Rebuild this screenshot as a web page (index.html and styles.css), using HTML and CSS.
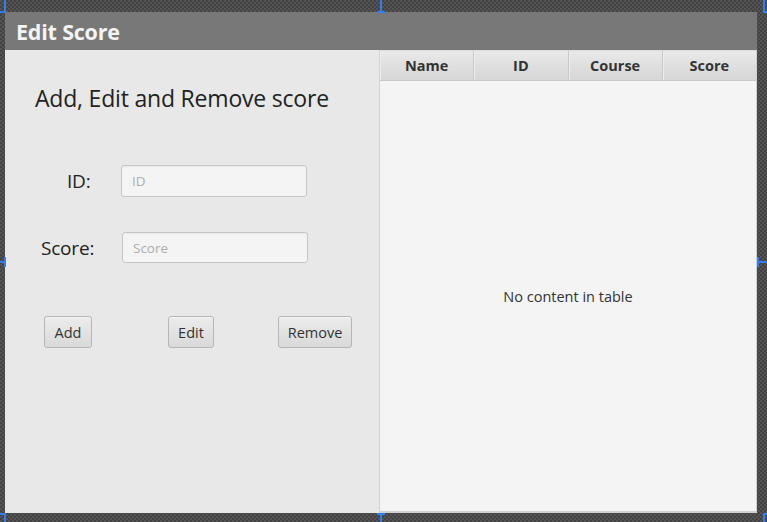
FILE: index.html
```html
<!DOCTYPE html>
<html>
<head>
<meta charset="utf-8">
<link rel="stylesheet" href="styles.css">
</head>
<body>
<div class="canvas">
  <div class="window">
    <div class="titlebar">Edit Score</div>
    <div class="content">
      <div class="left">
        <h1 class="heading">Add, Edit and Remove score</h1>
        <div class="form">
          <div class="row row-id">
            <span class="label label-id">ID:</span>
            <input class="field" type="text" placeholder="ID">
          </div>
          <div class="row row-score">
            <span class="label label-score">Score:</span>
            <input class="field" type="text" placeholder="Score">
          </div>
        </div>
        <div class="buttons">
          <button class="btn btn-add">Add</button>
          <button class="btn btn-edit">Edit</button>
          <button class="btn btn-remove">Remove</button>
        </div>
      </div>
      <div class="table">
        <div class="thead">
          <div class="th">Name</div>
          <div class="th">ID</div>
          <div class="th">Course</div>
          <div class="th">Score</div>
        </div>
        <div class="tbody">No content in table</div>
      </div>
    </div>
  </div>
  <div class="h v tl"></div><div class="h hz tl2"></div>
  <div class="h v tm"></div><div class="h hz tm2"></div>
  <div class="h v tr"></div><div class="h hz tr2"></div>
  <div class="h hz ml"></div><div class="h v ml2"></div>
  <div class="h hz mr"></div><div class="h v mr2"></div>
  <div class="h v bl"></div><div class="h hz bl2"></div>
  <div class="h v bm"></div><div class="h hz bm2"></div>
  <div class="h v br"></div><div class="h hz br2"></div>
</div>
</body>
</html>
```
FILE: styles.css
```css
* { box-sizing: border-box; }
html, body { margin: 0; padding: 0; }
body {
  width: 767px;
  height: 522px;
  overflow: hidden;
  font-family: "Open Sans", "Noto Sans", sans-serif;
  background-color: #4b4b4b;
  background-image: repeating-conic-gradient(#424242 0 25%, #555555 0 50%);
  background-size: 4px 4px;
}
.canvas {
  position: relative;
  width: 767px;
  height: 522px;
  padding: 12px 10px 9px 5px;
}
.window {
  width: 752px;
  height: 501px;
  display: flex;
  flex-direction: column;
}
.titlebar {
  height: 38px;
  background: #787878;
  color: #f4f4f4;
  font-weight: 700;
  font-size: 21.5px;
  line-height: 40px;
  padding-left: 11px;
  letter-spacing: -0.2px;
}
.content {
  flex: 1;
  display: flex;
}
.left {
  width: 375px;
  background: #e8e8e8;
  border-right: 1px solid #d2d2d2;
  display: flex;
  flex-direction: column;
}
.heading {
  margin: 0;
  font-weight: 400;
  font-size: 23px;
  color: #222;
  padding: 33px 0 0 30px;
  line-height: 30px;
  letter-spacing: -0.2px;
}
.form {
  display: flex;
  flex-direction: column;
  gap: 35px;
  padding-top: 52px;
}
.row {
  display: flex;
  align-items: center;
  height: 32px;
}
.label {
  font-size: 19px;
  color: #222;
  letter-spacing: -0.2px;
}
.row-id .label { width: 116px; padding-left: 62px; }
.row-score { height: 31px; }
.row-score .label { width: 117px; padding-left: 36px; }
.field {
  width: 186px;
  height: 100%;
  border: 1px solid #c6c6c6;
  border-radius: 3px;
  background: #f4f4f4;
  font-family: inherit;
  font-size: 13.5px;
  color: #333;
  padding: 0 10px;
  outline: none;
  box-shadow: inset 0 1px 1px rgba(0,0,0,0.04);
}
.field::placeholder { color: #adadad; }
.buttons {
  display: flex;
  align-items: center;
  padding: 53px 0 0 39px;
}
.btn {
  height: 32px;
  border: 1px solid #b6b6b6;
  border-radius: 3px;
  background: linear-gradient(#ececec, #d9d9d9);
  font-family: inherit;
  font-size: 14.5px;
  color: #333;
  padding: 0;
  box-shadow: inset 0 1px 0 #f6f6f6;
}
.btn-add { width: 48px; }
.btn-edit { width: 46px; margin-left: 76px; }
.btn-remove { width: 74px; margin-left: 64px; }
.table {
  flex: 1;
  display: flex;
  flex-direction: column;
  background: #f4f4f4;
  border-right: 1px solid #cfcfcf;
  border-bottom: 2px solid #d0d0d0;
}
.thead {
  height: 31px;
  display: flex;
  background: linear-gradient(#e9e9e9, #d6d6d6);
  border-bottom: 1px solid #c9c9c9;
  border-top: 1px solid #dcdcdc;
}
.th {
  flex: 1;
  text-align: center;
  font-weight: 700;
  font-size: 14.5px;
  line-height: 29px;
  color: #333;
  border-right: 1px solid #c8c8c8;
  box-shadow: inset 1px 0 0 #eeeeee;
}
.th:last-child { border-right: none; }
.tbody {
  flex: 1;
  display: flex;
  align-items: center;
  justify-content: center;
  font-size: 14.5px;
  color: #333;
  padding-top: 0;
}
.h { position: absolute; background: #2f7ff0; }
.v { width: 2px; }
.hz { height: 2px; }
.tl { left: 4px; top: 0; height: 13px; }
.tl2 { left: 0; top: 11px; width: 6px; }
.tm { left: 380px; top: 0; height: 13px; }
.tm2 { left: 377px; top: 11px; width: 8px; }
.tr { left: 763px; top: 0; height: 13px; }
.tr2 { left: 763px; top: 11px; width: 4px; }
.ml { left: 0; top: 261px; width: 6px; }
.ml2 { left: 4px; top: 257px; height: 10px; }
.mr { left: 757px; top: 261px; width: 10px; }
.mr2 { left: 757px; top: 257px; height: 10px; }
.bl { left: 4px; top: 513px; height: 9px; }
.bl2 { left: 0; top: 513px; width: 6px; }
.bm { left: 380px; top: 513px; height: 9px; }
.bm2 { left: 377px; top: 513px; width: 8px; }
.br { left: 763px; top: 513px; height: 9px; }
.br2 { left: 763px; top: 513px; width: 4px; }
```
